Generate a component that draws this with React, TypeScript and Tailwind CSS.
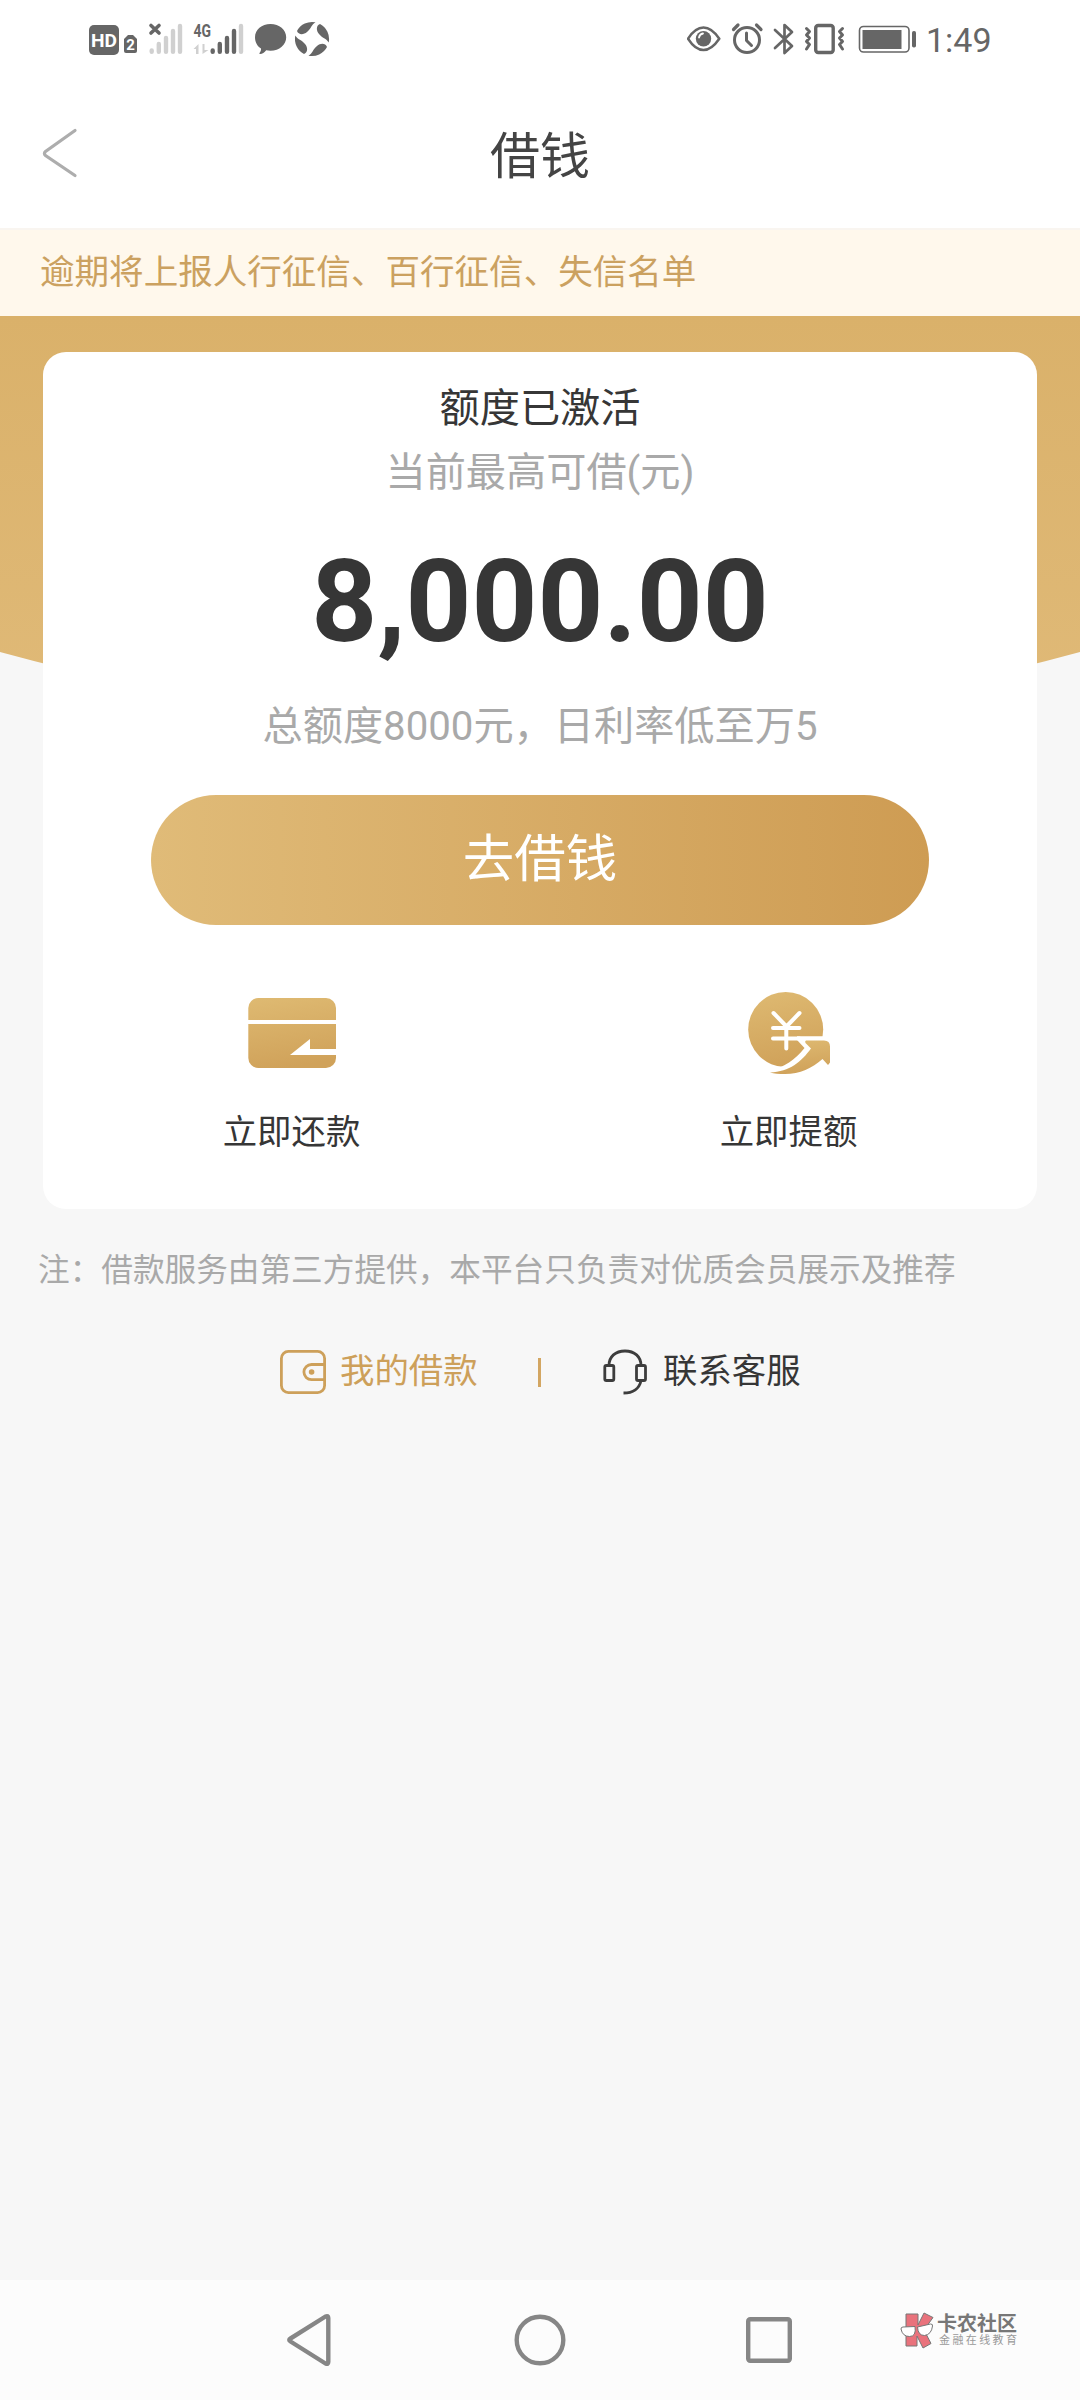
import type { ReactNode } from "react";

const blades = [0, 90, 180, 270];

function StatusBar() {
  return (
    <div className="h-[80px] flex items-start justify-between pl-[89px] pr-[85px]">
      <svg width="242" height="80" viewBox="89 0 242 80" fill="none">
        {/* HD */}
        <rect x="89" y="25" width="30" height="30" rx="5" fill="#666" />
        <text x="104" y="47" textAnchor="middle" fontFamily="Roboto, sans-serif" fontWeight="700" fontSize="19" textLength="26" lengthAdjust="spacingAndGlyphs" fill="#fff">HD</text>
        <path d="M128 35h5l4 4v12a2 2 0 0 1-2 2h-9a2 2 0 0 1-2-2V39z" fill="#666" />
        <text x="130.500" y="49.500" textAnchor="middle" fontFamily="Roboto, sans-serif" fontWeight="700" fontSize="15" fill="#fff">2</text>

        {/* Signal, sim 1 */}
        <path d="M151.700 50.500v1.300M158.800 44v7.800M166 38v13.800M173 31v20.800M180 26v25.800" stroke="#d0d0d0" strokeWidth="4.400" strokeLinecap="round" />
        <path d="M151 25.500l8 7.500M159 25.500l-8 7.500" stroke="#666" strokeWidth="3.600" strokeLinecap="round" />

        {/* Signal, sim 2 */}
        <text x="193.500" y="37" fontFamily="Roboto, sans-serif" fontWeight="700" fontSize="18.500" textLength="17.500" lengthAdjust="spacingAndGlyphs" fill="#666">4G</text>
        <path d="M193.500 49l5-5v10h-2.500v-5zM202.500 44h2v6h4l-6 4z" fill="#d0d0d0" />
        <g stroke="#666" strokeWidth="4.400" strokeLinecap="round">
          <path d="M212.700 50.500v1.300M219.800 44v7.800M227 38v13.800M234 31v20.800" />
          <path d="M241 26v25.800" stroke="#d0d0d0" />
        </g>

        {/* Message */}
        <path d="M270.500 24c8.800 0 15.700 5.800 15.700 13.200S279.500 50.700 270.500 50.700c-1.500 0-3-.2-4.300-.5-1.600 2.200-4 3.700-6 3.800-.9 0-1-.7-.5-1.300 1-1.200 1.500-2.700 1.300-4.200-3.800-2.500-6-6.500-6-11.300C255 29.800 261.700 24 270.500 24z" fill="#666" />

        {/* Swirl */}
        {blades.map((angle) => (
          <path
            key={angle}
            d="M297 31A17 17 0 0 1 315.500 22.300C311.500 24.500 311 29 307 32 303.500 35 298.500 35 297 31Z"
            transform={`rotate(${angle} 312 39)`}
            fill="#666"
          />
        ))}
      </svg>
      <svg width="308" height="80" viewBox="687 0 308 80" fill="none" stroke="#666">
        {/* Eye */}
        <path d="M688 38.700c4.500-7 10-11.200 15.500-11.200S714.500 31.700 719.300 38.700c-4.800 7-10.300 11.300-15.800 11.300S692.500 45.700 688 38.700z" strokeWidth="2.500" strokeLinejoin="round" />
        <circle cx="703.500" cy="38.700" r="7.700" fill="#666" stroke="none" />
        <path d="M699 37.500a5 5 0 0 1 4-4" stroke="#fff" strokeWidth="1.800" strokeLinecap="round" />

        {/* Alarm */}
        <circle cx="747" cy="40" r="12.500" strokeWidth="3" />
        <path d="M746.500 33v7.500l5 5" strokeWidth="3" strokeLinecap="round" strokeLinejoin="round" />
        <path d="M733.500 29.500l4.500-4.500M756.500 25l4.500 4.500" strokeWidth="3.200" strokeLinecap="round" />

        {/* Bluetooth */}
        <path d="M775 30l17 16-7.500 7V25l7.500 7-17 16" strokeWidth="2.700" strokeLinecap="round" strokeLinejoin="round" />

        {/* Vibrate */}
        <rect x="815.700" y="25.500" width="17.500" height="27" rx="2.500" strokeWidth="3.400" />
        <path d="M806.500 28.500l3 3-3 3.500 3 3-3 3.500 3 3-3 4.500M842.500 28.500l-3 3 3 3.500-3 3 3 3.500-3 3 3 4.500" strokeWidth="3" strokeLinecap="round" strokeLinejoin="round" />

        {/* Battery */}
        <rect x="859.500" y="26.500" width="49.500" height="25.500" rx="4" strokeWidth="1.600" />
        <rect x="862.500" y="30" width="39" height="19" fill="#666" stroke="none" />
        <rect x="912" y="31" width="4" height="16.500" rx="1.800" fill="#666" stroke="none" />

        <text x="926" y="52" fontFamily="Roboto, sans-serif" fontWeight="400" fontSize="34" fill="#666" stroke="none">1:49</text>
      </svg>
    </div>
  );
}

function GoldGradient({ id }: { id: string }) {
  return (
    <linearGradient id={id} x1="0.2" y1="0" x2="0.4" y2="1">
      <stop offset="0" stopColor="#deb971" />
      <stop offset="1" stopColor="#d0a25a" />
    </linearGradient>
  );
}

function RepayIcon() {
  return (
    <svg width="88" height="92" viewBox="248 987 88 92">
      <defs>
        <GoldGradient id="repay" />
      </defs>
      <rect x="248.300" y="998" width="87.700" height="70" rx="10" fill="url(#repay)" />
      <path d="M248 1020h88v4h-88zM336 1049v6h-46l20-16v10z" fill="#fff" />
    </svg>
  );
}

function RaiseIcon() {
  return (
    <svg width="88" height="92" viewBox="745 987 88 92">
      <defs>
        <GoldGradient id="raise" />
      </defs>
      <circle cx="785.700" cy="1029.500" r="37.500" fill="url(#raise)" />
      <path d="M768 1071C784 1068 796 1059 804.500 1048L797 1040V1036.300H833V1078H768z" fill="#fff" />
      <path d="M806 1040.500H824Q830 1040.500 830 1046.500V1062.500L828 1065L822.500 1059C812 1068 800 1074 785 1074 779 1074 774 1073.500 770 1072.500 790 1071.500 801 1062 811 1048.500L805.500 1043Q804.500 1041 806 1040.500z" fill="url(#raise)" />
      <path d="M773.500 1013l13 13.500L799.500 1013M773 1028h26.500M773 1038.500h26.500M786.300 1027v21.500" fill="none" stroke="#fff" strokeWidth="4" strokeLinecap="round" />
    </svg>
  );
}

function Action({ icon, label }: { icon: ReactNode; label: string }) {
  return (
    <div className="flex flex-1 flex-col items-center">
      {icon}
      <span className="mt-[28px] text-[34.4px] leading-[50px] text-[#363636]">{label}</span>
    </div>
  );
}

function LoanCard() {
  return (
    <div className="relative mx-[43px] h-[857px] rounded-[23px] bg-white pt-[27px] text-center">
      <div className="text-[40.2px] leading-[60px] text-[#363636]">额度已激活</div>
      <div className="mt-[4px] text-[40.2px] leading-[60px] text-[#a9a9a9]">当前最高可借(元)</div>
      <div className="mt-[29px] text-[115px] leading-[140px] font-bold text-[#363636]">8,000.00</div>
      <div className="mt-[25px] text-[40.2px] leading-[60px] text-[#a9a9a9]">总额度8000元，日利率低至万5</div>
      <button className="mx-auto mt-[38px] flex h-[130px] w-[778px] items-center justify-center rounded-full bg-linear-to-r from-[#e0bb78] to-[#ce9c53] text-[51.5px] text-white">
        去借钱
      </button>
      <div className="mt-[62px] flex">
        <Action icon={<RepayIcon />} label="立即还款" />
        <Action icon={<RaiseIcon />} label="立即提额" />
      </div>
    </div>
  );
}

function WalletIcon() {
  return (
    <svg width="46" height="44" viewBox="280 1351 46 44" fill="none" stroke="#cda05a" strokeWidth="2.800">
      <rect x="281.400" y="1352.400" width="43.200" height="41.200" rx="7" />
      <path d="M324.500 1365.500h-13a7.600 7.600 0 0 0 0 15.200h13" />
      <circle cx="311.600" cy="1373" r="2.800" fill="#cda05a" stroke="none" />
    </svg>
  );
}

function HeadsetIcon() {
  return (
    <svg width="46" height="46" viewBox="602 1349 46 46" fill="none" stroke="#3d3d3d" strokeWidth="2.800">
      <rect x="604.800" y="1365.500" width="9" height="15" rx="1.500" />
      <rect x="636.500" y="1365.500" width="9" height="15" rx="1.500" />
      <path d="M609 1365.500c0-9 6.500-14.500 16-14.500s16 5.500 16 14.500M641 1380.500c-1.500 8-8 12.500-17.500 12.500" />
    </svg>
  );
}

function NavBar() {
  return (
    <div className="relative flex h-[120px] items-center bg-[#fcfcfc] pl-[286px]">
      <svg width="508" height="60" viewBox="286 2310 508 60" fill="none" stroke="#868686" strokeWidth="4.400" strokeLinejoin="round">
        <path d="M325.500 2316.500Q328.300 2315.300 328.300 2318v44q0 2.700-2.800 1.500l-35-22q-2.500-1.500 0-3z" />
        <circle cx="540" cy="2340" r="23.300" />
        <rect x="748.200" y="2319.200" width="41.600" height="41.600" rx="2" />
      </svg>
      {/* Community watermark */}
      <div className="absolute left-[899px] top-[30px] flex">
        <svg width="36" height="40" viewBox="899 2310 36 40" stroke="#777" strokeWidth="1">
          <path d="M906 2314h12v11l6-12 9 4.500-9 12.500 7 13.500-8 4.500-6-12v10h-11z" fill="#e9727c" />
          <path d="M901 2329q0-2 2-2l12-.5q1.500 10-5.500 10-7 0-8.500-7.500zM917.500 2327l13-3q2.500 0 2 2-1 8.500-8 9.500-6.500 0-7-8.500z" fill="#fff" />
        </svg>
        <div className="ml-[2px] mt-[3px] flex flex-col whitespace-nowrap">
          <span className="text-[20px] leading-[22px] font-bold text-[#777777]">卡农社区</span>
          <span className="ml-[2px] text-[11px] leading-[12px] tracking-[2.4px] text-[#999999]">金融在线教育</span>
        </div>
      </div>
    </div>
  );
}

export default function App() {
  return (
    <div lang="zh-CN" className="flex h-[2400px] w-[1080px] flex-col overflow-hidden bg-[#f7f7f7] font-['Roboto','Noto_Sans_CJK_SC',sans-serif]">
      <header className="h-[228px] bg-white">
        <StatusBar />
        <div className="flex h-[148px] items-start">
          <svg className="ml-[42px] mt-[47px]" width="36" height="52" viewBox="42 127 36 52" fill="none" stroke="#adadad" strokeWidth="3.200" strokeLinecap="round">
            <path d="M75 130.500L45.500 151.500q-2.200 2 0 4L75 175.500" />
          </svg>
          <h1 className="mt-[42px] flex-1 pr-[78px] text-center text-[50px] leading-[70px] text-[#444444]">借钱</h1>
        </div>
      </header>

      <div className="h-[88px] border-t-2 border-[#f9f5f0] bg-[#fff8ec] pl-[40px] text-[34.55px] leading-[84px] text-[#cba160]">
        逾期将上报人行征信、百行征信、失信名单
      </div>

      <main className="relative flex-1 pt-[36px]">
        <svg className="absolute left-0 top-0" width="1080" height="420" viewBox="0 0 1080 420">
          <defs>
            <linearGradient id="hero" x1="0" y1="0" x2="0" y2="1">
              <stop offset="0" stopColor="#dab16a" />
              <stop offset="1" stopColor="#e0ba78" />
            </linearGradient>
          </defs>
          <path d="M0 0H1080V336Q540 484 0 336Z" fill="url(#hero)" />
        </svg>
        <LoanCard />
        <p className="mt-[37px] pl-[38px] text-[31.65px] leading-[50px] text-[#a9a9a9]">
          注：借款服务由第三方提供，本平台只负责对优质会员展示及推荐
        </p>
        <div className="mt-[51px] flex h-[50px] items-center pl-[280px] text-[34.4px]">
          <WalletIcon />
          <span className="ml-[14px] w-[138px] text-[#cda05a]">我的借款</span>
          <span className="ml-[60px] h-[29px] w-[3px] bg-[#d3a662]" />
          <span className="ml-[61px]">
            <HeadsetIcon />
          </span>
          <span className="ml-[15px] text-[#363636]">联系客服</span>
        </div>
      </main>

      <NavBar />
    </div>
  );
}
